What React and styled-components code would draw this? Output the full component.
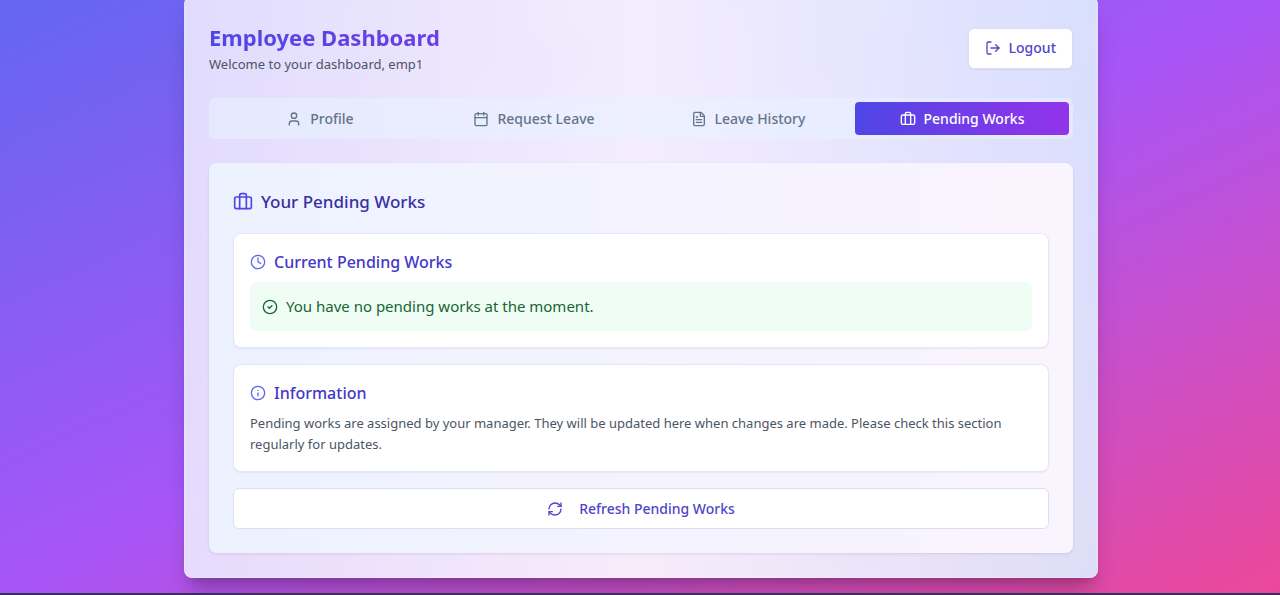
import React from "react";
import styled, { createGlobalStyle, css } from "styled-components";
import { User, Calendar, FileText, Briefcase, Clock, CircleCheck, Info, RefreshCw, LogOut } from "lucide-react";

const GlobalStyle = createGlobalStyle`
  *, *::before, *::after { box-sizing: border-box; }
  body {
    margin: 0;
    font-family: "Noto Sans", "Open Sans", sans-serif;
    font-size: 14px;
    line-height: 20px;
    color: #4b5563;
  }
  h1, h2, h3, p { margin: 0; }
  button { font-family: inherit; cursor: pointer; }
  svg { flex: none; }
`;

const Page = styled.div`
  min-height: 100vh;
  overflow: hidden;
  padding: 0 16px 15px 18px;
  border-bottom: 2px solid #3b2f5c;
  background: linear-gradient(to bottom right, #6366f1, #a855f7, #ec4899);
`;

const Shell = styled.main`
  max-width: 914px;
  margin: -4px auto 0;
  padding: 24px;
  border: 1px solid rgba(255, 255, 255, 0.2);
  border-radius: 8px;
  background: linear-gradient(to right, rgba(237, 233, 254, 0.9), rgba(252, 249, 254, 0.92), rgba(222, 236, 254, 0.91));
  box-shadow: 0 20px 25px -5px rgba(0, 0, 0, 0.2), 0 8px 10px -6px rgba(0, 0, 0, 0.2);
`;

const Header = styled.header`
  display: flex;
  justify-content: space-between;
  align-items: center;
  margin-bottom: 23px;
`;

const Title = styled.h1`
  width: fit-content;
  font-size: 22px;
  line-height: 33px;
  font-weight: 700;
  color: transparent;
  background: linear-gradient(to right, #4f46e5, #6d3fe0);
  background-clip: text;
`;

const buttonBase = css`
  display: flex;
  align-items: center;
  justify-content: center;
  height: 41px;
  font-size: 14px;
  line-height: 20px;
  font-weight: 500;
  color: #4f46c8;
  background: #fff;
  border: 1px solid #d9ddf6;
  border-radius: 6px;
`;

const LogoutButton = styled.button`
  ${buttonBase}
  gap: 8px;
  padding: 0 16px;
  box-shadow: 0 1px 2px rgba(0, 0, 0, 0.06);
`;

const RefreshButton = styled.button`
  ${buttonBase}
  gap: 16px;
  width: 100%;
`;

const Tabs = styled.nav`
  display: grid;
  grid-template-columns: repeat(4, 1fr);
  padding: 4px;
  margin-bottom: 24px;
  border-radius: 6px;
  background: rgba(232, 242, 255, 0.6);
`;

const Tab = styled.button`
  display: flex;
  align-items: center;
  justify-content: center;
  gap: 8px;
  height: 33px;
  padding: 0 12px;
  border: 0;
  border-radius: 4px;
  font-size: 14px;
  line-height: 20px;
  font-weight: 500;
  color: ${(p) => (p.$active ? "#fff" : "#64748b")};
  background: ${(p) => (p.$active ? "linear-gradient(to right, #4f46e5, #9333ea)" : "transparent")};
`;

const Panel = styled.section`
  display: flex;
  flex-direction: column;
  gap: 16px;
  padding: 24px;
  border-radius: 8px;
  background: linear-gradient(to right, #edf2ff, #f4f3ff 50%, #faf4fe);
  box-shadow: 0 1px 3px rgba(0, 0, 0, 0.1);
`;

const PanelTitle = styled.h2`
  display: flex;
  align-items: center;
  gap: 8px;
  font-size: 17px;
  line-height: 30px;
  font-weight: 500;
  color: #3730a3;
  svg { color: #4f46e5; }
`;

const Card = styled.article`
  padding: 16px;
  border: 1px solid #e3e7fb;
  border-radius: 8px;
  background: #fff;
  box-shadow: 0 1px 2px rgba(0, 0, 0, 0.06);
`;

const CardTitle = styled.h3`
  display: flex;
  align-items: center;
  gap: 8px;
  margin-bottom: 8px;
  font-size: 16px;
  line-height: 24px;
  font-weight: 500;
  color: #4338ca;
  svg { color: #6366f1; }
`;

const Notice = styled.p`
  display: flex;
  align-items: center;
  gap: 8px;
  padding: 12px;
  border-radius: 6px;
  font-size: 15px;
  line-height: 25px;
  color: #166534;
  background: #f0fdf4;
`;

const Muted = styled.p`
  font-size: 13px;
  line-height: 21px;
  color: #4b5563;
`;

const tabs = [
  { label: "Profile", Icon: User },
  { label: "Request Leave", Icon: Calendar },
  { label: "Leave History", Icon: FileText },
  { label: "Pending Works", Icon: Briefcase, active: true },
];

export default function App() {
  return (
    <>
      <GlobalStyle />
      <Page>
        <Shell>
          <Header>
            <div>
              <Title>Employee Dashboard</Title>
              <Muted>Welcome to your dashboard, emp1</Muted>
            </div>
            <LogoutButton type="button">
              <LogOut size={16} />
              Logout
            </LogoutButton>
          </Header>
          <Tabs>
            {tabs.map(({ label, Icon, active }) => (
              <Tab key={label} type="button" $active={active} aria-current={active ? "page" : undefined}>
                <Icon size={16} />
                {label}
              </Tab>
            ))}
          </Tabs>
          <Panel>
            <PanelTitle>
              <Briefcase size={20} />
              Your Pending Works
            </PanelTitle>
            <Card>
              <CardTitle>
                <Clock size={16} />
                Current Pending Works
              </CardTitle>
              <Notice>
                <CircleCheck size={16} />
                You have no pending works at the moment.
              </Notice>
            </Card>
            <Card>
              <CardTitle>
                <Info size={16} />
                Information
              </CardTitle>
              <Muted>
                Pending works are assigned by your manager. They will be updated here when changes are made.
                Please check this section regularly for updates.
              </Muted>
            </Card>
            <RefreshButton type="button">
              <RefreshCw size={16} />
              Refresh Pending Works
            </RefreshButton>
          </Panel>
        </Shell>
      </Page>
    </>
  );
}
